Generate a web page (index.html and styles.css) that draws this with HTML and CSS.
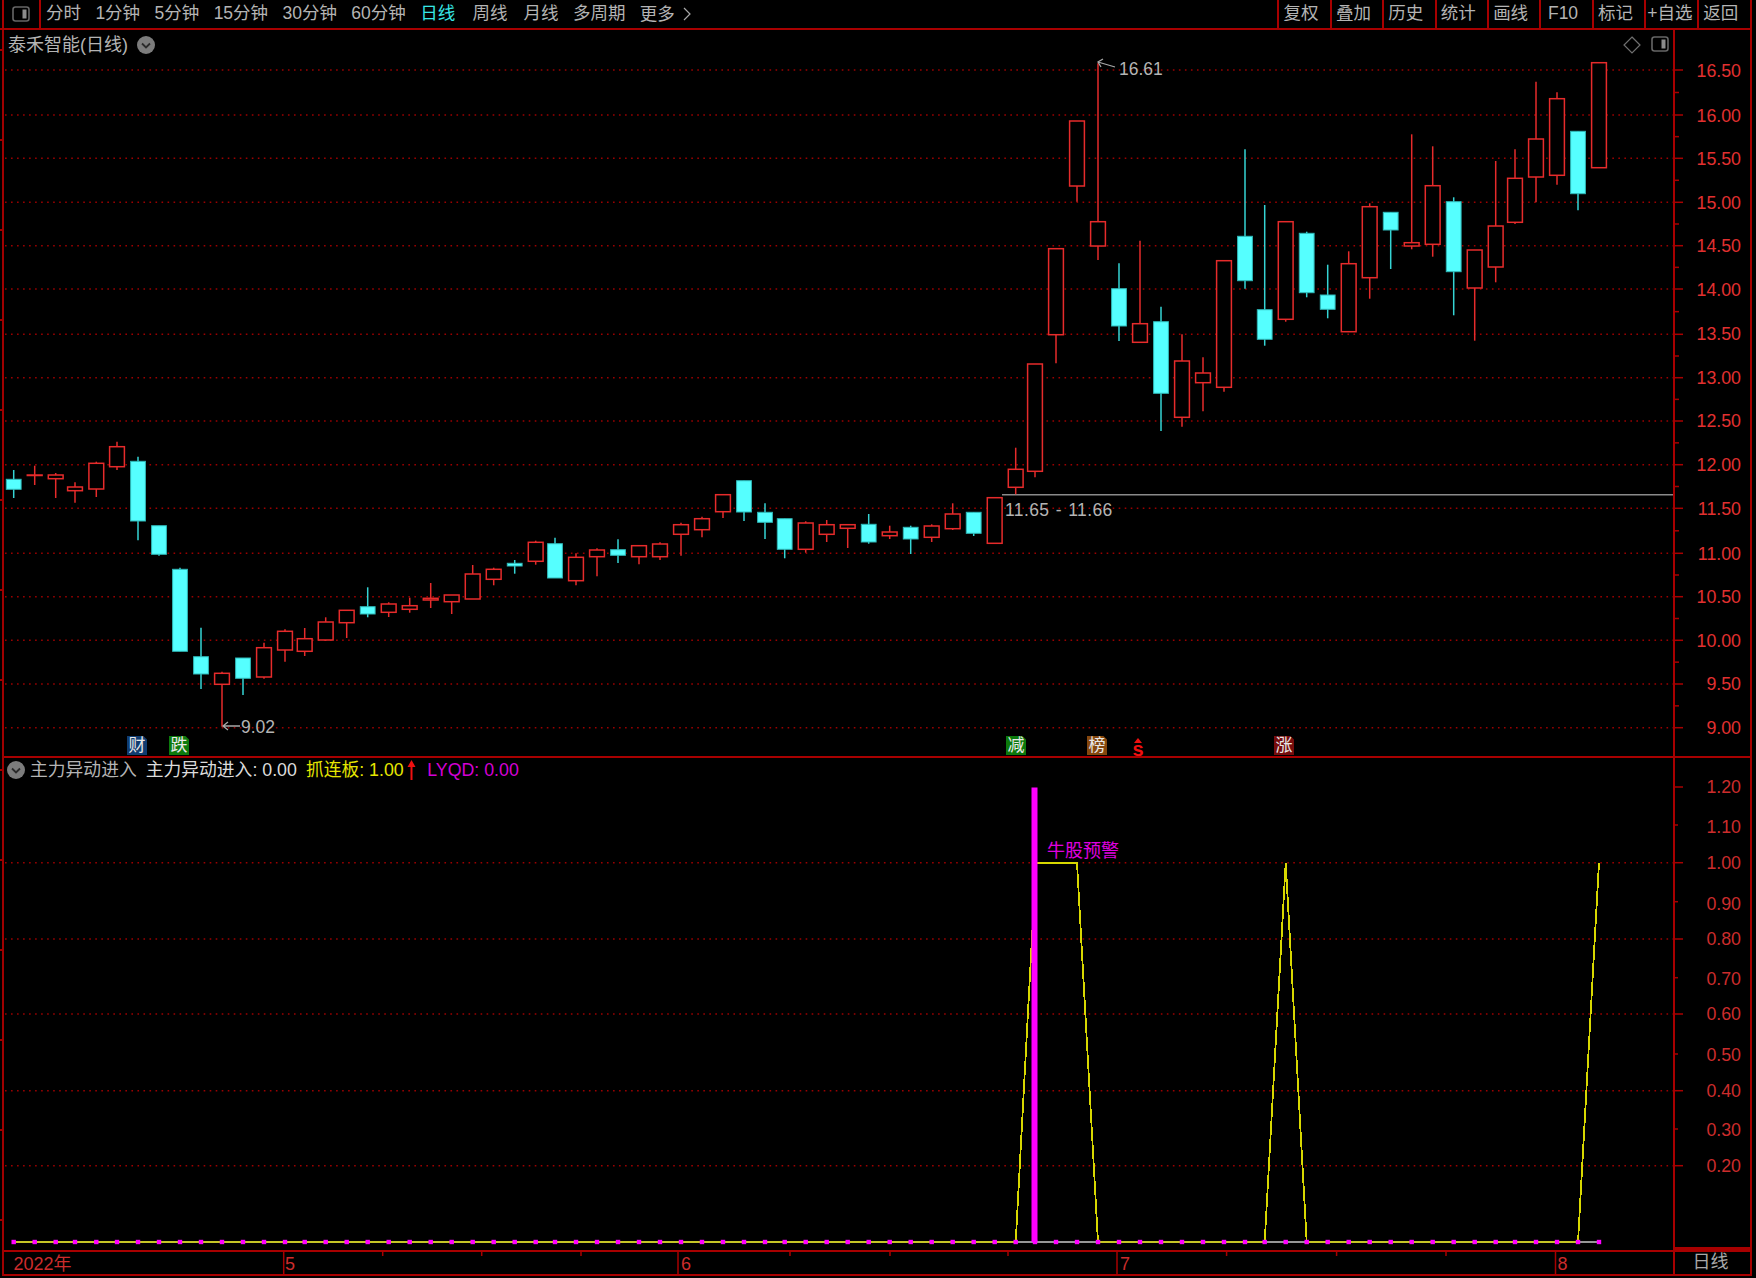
FILE: index.html
```html
<!DOCTYPE html>
<html lang="zh-CN">
<head>
<meta charset="utf-8">
<title>泰禾智能 日线</title>
<link rel="stylesheet" href="styles.css">
</head>
<body>
<div class="app">
  <header class="toolbar">
    <div class="tool-icon">
      <svg class="panel-glyph" viewBox="0 0 18 16"><rect x="1" y="1" width="16" height="14" rx="2.5"/><rect class="glyph-bar" x="10.5" y="3.5" width="4" height="9"/></svg>
    </div>
    <nav class="periods">
      <span>分时</span><span>1分钟</span><span>5分钟</span><span>15分钟</span><span>30分钟</span><span>60分钟</span>
      <span class="active">日线</span><span class="week">周线</span><span>月线</span><span>多周期</span>
      <span class="more">更多<svg class="more-arrow" viewBox="0 0 8 16"><path d="M1 2 L7 8 L1 14"/></svg></span>
    </nav>
    <nav class="actions">
      <span>复权</span><span>叠加</span><span>历史</span><span>统计</span><span>画线</span><span>F10</span><span>标记</span><span class="pick">+自选</span><span class="last">返回</span>
    </nav>
  </header>

  <main class="workspace">
    <div class="gutter"></div>

    <section class="plot main-plot">
      <svg id="price" class="chart" viewBox="4 30 1669 726"></svg>
      <div class="plot-title">
        <span>泰禾智能(日线)</span>
        <svg class="chevron" viewBox="0 0 18 18"><circle cx="9" cy="9" r="9"/><path d="M5 7.5 L9 11.5 L13 7.5"/></svg>
      </div>
      <div class="plot-tools">
        <svg class="diamond" viewBox="0 0 18 18"><path d="M9 1 L17 9 L9 17 L1 9 Z"/></svg>
        <svg class="panel-glyph" viewBox="0 0 18 16"><rect x="1" y="1" width="16" height="14" rx="2.5"/><rect class="glyph-bar" x="10.5" y="3.5" width="4" height="9"/></svg>
      </div>
      <span class="note note-high">16.61</span>
      <span class="note note-low">9.02</span>
      <span class="note note-range">11.65 - 11.66</span>
      <span class="badge badge-cai">财</span>
      <span class="badge badge-die">跌</span>
      <span class="badge badge-jian">减</span>
      <span class="badge badge-bang">榜</span>
      <span class="s-mark">s</span>
      <span class="badge badge-zhang">涨</span>
    </section>

    <aside class="axis main-axis">
      <svg id="price-axis" class="chart" viewBox="1675 30 75 726">
        <text x="1741" y="76.6">16.50</text><text x="1741" y="121.6">16.00</text><text x="1741" y="165">15.50</text><text x="1741" y="208.6">15.00</text>
        <text x="1741" y="252">14.50</text><text x="1741" y="295.6">14.00</text><text x="1741" y="340">13.50</text><text x="1741" y="384">13.00</text>
        <text x="1741" y="427">12.50</text><text x="1741" y="471">12.00</text><text x="1741" y="514.6">11.50</text><text x="1741" y="559.6">11.00</text>
        <text x="1741" y="603">10.50</text><text x="1741" y="646.6">10.00</text><text x="1741" y="690">9.50</text><text x="1741" y="734">9.00</text>
      </svg>
    </aside>

    <section class="plot sub-plot">
      <svg id="signal" class="chart" viewBox="4 758 1669 492"></svg>
      <div class="sub-legend">
        <svg class="chevron" viewBox="0 0 18 18"><circle cx="9" cy="9" r="9"/><path d="M5 7.5 L9 11.5 L13 7.5"/></svg>
        <span class="legend-name">主力异动进入</span>
        <span class="legend-white">主力异动进入: 0.00</span>
        <span class="legend-yellow">抓连板: 1.00</span>
        <svg class="up-arrow" viewBox="0 0 9 20"><path d="M4.5 0 L8.5 7 L5.5 7 L5.5 20 L3.5 20 L3.5 7 L0.5 7 Z"/></svg>
        <span class="legend-magenta">LYQD: 0.00</span>
      </div>
      <span class="signal-label">牛股预警</span>
    </section>

    <aside class="axis sub-axis">
      <svg id="signal-axis" class="chart" viewBox="1675 758 75 489">
        <text x="1741" y="793">1.20</text><text x="1741" y="833">1.10</text><text x="1741" y="869">1.00</text><text x="1741" y="909.5">0.90</text>
        <text x="1741" y="945">0.80</text><text x="1741" y="984.5">0.70</text><text x="1741" y="1020">0.60</text><text x="1741" y="1060.5">0.50</text>
        <text x="1741" y="1097">0.40</text><text x="1741" y="1135.5">0.30</text><text x="1741" y="1172">0.20</text>
      </svg>
    </aside>

    <section class="time-axis">
      <svg id="time" class="chart" viewBox="4 1252 1669 22">
        <text x="13.5" y="1270">2022年</text><text x="285" y="1270">5</text><text x="681" y="1270">6</text><text x="1120" y="1270">7</text><text x="1557.5" y="1270">8</text>
      </svg>
    </section>
    <aside class="period-cell">日线</aside>
  </main>
</div>
<script src="chart.js"></script>
</body>
</html>
```
FILE: styles.css
```css
* { box-sizing: border-box; }
html, body { margin: 0; height: 100%; background: #000; }
body {
  font-family: "Liberation Sans", "Noto Sans CJK SC", sans-serif;
  font-size: 18px;
  color: #b4b4b4;
  overflow: hidden;
}
.app { width: 1752px; }

/* toolbar */
.toolbar {
  display: flex;
  height: 30px;
  border-bottom: 2px solid #a80000;
  font-size: 17.5px;
  line-height: 26px;
}
.tool-icon {
  width: 39px;
  padding-left: 11px;
  padding-top: 6px;
  border-left: 2px solid #a80000;
  margin-left: 2px;
  border-right: 2px solid #a80000;
}
.tool-icon .panel-glyph { display: block; margin-left: -3px; }
.periods { display: flex; gap: 14.4px; padding-left: 5px; flex: 1; }
.periods .active { color: #37e6e6; margin-right: 3px; }
.periods .week { margin-right: 1.5px; }
.more { display: flex; align-items: center; gap: 8px; }
.more-arrow { width: 8px; height: 16px; fill: none; stroke: #a8a8a8; stroke-width: 1.2; }
.actions { display: flex; }
.actions span {
  width: 52.4px;
  text-align: center;
  padding-right: 7px;
  border-left: 2px solid #a80000;
}
.actions .pick { padding-right: 3px; white-space: nowrap; }
.actions .last { width: 55.5px; border-right: 2px solid #a80000; }

.panel-glyph { width: 18px; height: 16px; }
.panel-glyph rect { fill: none; stroke: #666; stroke-width: 1.6; }
.panel-glyph .glyph-bar { fill: #8c8c8c; stroke: none; }

/* frame */
.workspace {
  display: grid;
  grid-template-columns: 4px 1669px 1fr;
  grid-template-rows: 728px 494px 24px;
  border-right: 2px solid #a80000;
}
.gutter {
  grid-row: 1 / 4;
  border-right: 2px solid #a00000;
  background: repeating-linear-gradient(to bottom, transparent 0, transparent 19px, #a00000 19px, #a00000 21px, transparent 21px, transparent 90px);
}
.plot { position: relative; border-bottom: 2px solid #a80000; }
.chart { display: block; width: 100%; height: 100%; }
.axis { border-left: 2px solid #a80000; border-bottom: 2px solid #a80000; }
.sub-axis { border-bottom-width: 5px; }
.axis text { text-anchor: end; font-size: 17.8px; fill: #e23030; }
.sub-axis text { fill: #cc2c2c; }

/* chart primitives drawn by chart.js */
.grid { stroke: #9c0000; stroke-width: 1.4; stroke-dasharray: 1.6 4.42; }
.tick { stroke: #a80000; stroke-width: 1.5; }
.wick-up { stroke: #e62b2b; stroke-width: 1.5; }
.wick-down { stroke: #35d4d4; stroke-width: 1.5; }
.body-up { fill: #000; stroke: #e62b2b; stroke-width: 1.5; }
.body-down { fill: #55ffff; stroke: #2fb8b8; stroke-width: 1; }
.guide { stroke: #8a8a8a; stroke-width: 1.5; }
.note-arrow { stroke: #a8a8a8; stroke-width: 1.3; fill: none; }
.zero-yellow { stroke: #d4d400; stroke-width: 1.6; fill: none; }
.zero-white { stroke: #c8c8c8; stroke-width: 1.6; }
.signal-yellow { stroke: #d8d800; stroke-width: 1.8; fill: none; shape-rendering: crispEdges; }
.signal-bar { stroke: #ff00ff; stroke-width: 6; }
.signal-dot { fill: #ff00ff; }
#time text { font-size: 18px; fill: #cc2c2c; }

/* overlays */
.plot-title {
  position: absolute; left: 4px; top: 2px;
  display: flex; align-items: center; gap: 9px;
  line-height: 26px;
}
.chevron { width: 18px; height: 18px; display: block; }
.chevron circle { fill: #7c7c7c; }
.chevron path { fill: none; stroke: #2a2a2a; stroke-width: 1.8; }
.plot-tools { position: absolute; right: 4px; top: 6px; display: flex; gap: 10px; }
.diamond { width: 18px; height: 18px; fill: none; stroke: #707070; stroke-width: 1.2; }
.note { position: absolute; font-size: 17.5px; color: #b4b4b4; line-height: 20px; white-space: nowrap; }
.note-high { left: 1115px; top: 29px; }
.note-low { left: 237px; top: 687px; }
.note-range { left: 1001px; top: 470px; letter-spacing: 0.4px; word-spacing: 1px; }
.badge {
  position: absolute; top: 706px;
  width: 20px; height: 19px;
  font-size: 17px; line-height: 19px; text-align: center;
  color: #e8e8e8;
  clip-path: polygon(0 0, 82% 0, 100% 18%, 100% 100%, 0 100%);
}
.badge-cai { left: 123px; background: #103c70; }
.badge-die { left: 165px; background: #0c7a0c; }
.badge-jian { left: 1002px; background: #0c7a0c; }
.badge-bang { left: 1083px; background: #85470e; }
.badge-zhang { left: 1270px; background: #760c0c; }
.s-mark {
  position: absolute; left: 1128px; top: 713px;
  width: 12px; text-align: center;
  font-size: 20px; font-weight: bold; line-height: 13px; color: #f01010;
}
.s-mark::before {
  content: ""; position: absolute; left: 2px; top: -5px;
  border: 4px solid transparent; border-top: 0; border-bottom: 5px solid #f01010;
}
.sub-legend {
  position: absolute; left: 3px; top: 0;
  display: flex; align-items: center;
  height: 24px; line-height: 24px;
  font-size: 17.8px;
  white-space: nowrap;
}
.legend-name { margin-left: 5px; }
.legend-white { margin-left: 9px; color: #dcdcdc; }
.legend-yellow { margin-left: 9px; color: #e6e600; }
.legend-magenta { margin-left: 11.5px; color: #d400d4; }
.up-arrow { width: 9px; height: 20px; margin-left: 3px; fill: #f01010; }
.signal-label {
  position: absolute; left: 1043px; top: 82px;
  font-size: 18px; line-height: 22px; color: #e000e0;
}
.time-axis { grid-column: 2; border-bottom: 2px solid #a80000; }
.period-cell {
  border-left: 2px solid #a80000;
  border-bottom: 2px solid #a80000;
  line-height: 20px;
  text-align: center;
  padding-right: 4px;
  color: #a8a8a8;
}
```
FILE: chart.js
```js
// x, wick top, body top, body bottom, wick bottom, direction (1 = up/red, 0 = down/cyan)
var candles = [
  [13.7,470,479.3,489.3,498,0],[34.7,465.7,475,475.5,485,1],[55.7,473,475,478.7,498,1],[75,482.3,487,490.7,502.7,1],
  [96.3,461.7,463.3,489,497,1],[117,441.7,446.7,466.7,470,1],[138,456.7,461.3,521,540.3,0],[159,525.7,525.7,554.3,555.7,0],
  [180,567.7,569.3,651.3,651.3,0],[201,627.7,656.7,674,689,0],[222,671.7,673.3,684.3,726.7,1],[243,658,658,678.3,695,0],
  [264,642.7,647.7,677,678.7,1],[285,629.3,631.3,650,661.7,1],[304.7,628,638.7,651.3,656,1],[325.7,617.3,622,640,640.7,1],
  [346.7,610.3,610.3,622.7,638,1],[367.7,587.3,606.7,614,617.3,0],[388.7,602.3,604,612.3,617,1],[409.7,597.7,605.7,609.3,612.7,1],
  [430.7,583,598.3,600,608,1],[451.7,595,595,601.7,614,1],[472.7,565,574,599,599,1],[493.7,567.7,569.3,579.3,585.3,1],
  [514.7,560,563.3,566,573.7,0],[535.7,540.7,542.3,561.3,564.7,1],[555,537.7,543.7,578,578,0],[576,553.3,557.3,580.7,585.3,1],
  [597,548.3,550,556.7,576.3,1],[618,539.3,549.7,555.3,563,0],[639,545.7,545.7,556.7,564.3,1],[660,542.3,544,556.7,560,1],
  [681,522.7,524.7,534.3,555.7,1],[702,516.7,518.7,529.7,537.3,1],[723,494.7,494.7,511.7,518,1],[744,480.7,480.7,512,521,0],
  [765,503.3,512.3,522.3,539,0],[784.7,518.7,518.7,549.3,558.3,0],[805.7,521.3,523,549.3,552.7,1],[826.7,520,524.7,534.3,542,1],
  [847.7,524.7,524.7,528.3,548,1],[868.7,514,524.3,542,543.7,0],[889.7,525.7,532,535.7,539,1],[910.7,525.7,527.3,539,554,0],
  [931.7,524.3,526,537.3,542,1],[952.7,503.3,514,528.7,530,1],[973.7,512.3,512.3,533.3,536,0],[994.7,497.7,497.7,543.3,543.3,1],
  [1015.7,447.7,469.3,487.3,494.3,1],[1035,364,364,471.3,477.3,1],[1056,248.7,248.7,334.7,363.3,1],[1077,121,121,186,201.7,1],
  [1098,63.3,221.7,246,260,1],[1119,263.3,288.7,326,341,0],[1140,240.7,323.7,342.3,342.3,1],[1161,306.7,321.7,393.3,431,0],
  [1182,334.3,361,417.3,426.7,1],[1203,357.3,373,382.7,411.3,1],[1224,260.7,260.7,387.3,391.7,1],[1245,149.3,236.3,280.7,288.7,0],
  [1264.7,205,309.7,339.3,345.7,0],[1285.7,221.7,221.7,319.3,321.7,1],[1306.7,231.7,233.3,292.7,297.3,0],[1327.7,264.7,295,309.3,318.3,0],
  [1348.7,251.3,263.7,331.7,331.7,1],[1369.7,203.3,206.7,277.7,298.7,1],[1390.7,212.3,212.3,230,269,0],[1411.7,134.3,242.7,246,249.3,1],
  [1432.7,146.3,185.7,244.3,256.7,1],[1453.7,197.3,201.7,271.7,315.3,0],[1474.7,250,250,288,340.7,1],[1495.7,161,226,267,282.3,1],
  [1515,149.3,178.3,222.3,224,1],[1536,81.7,139,177,202.3,1],[1557,92.3,98.7,175.3,184.7,1],[1578,131.3,131.3,193.7,210.3,0],
  [1599,62.7,62.7,167.7,167.7,1]
];
var priceLevels = [70,115,158.3,202.3,245.7,289,334.3,377.7,421,464.7,508.3,553.3,596.7,640.3,684,727.7];
var signalLevels = [862.7,939,1014,1090.7,1165.7];
var signalAxis = [[787,0],[825,1],[862.7,0],[901.7,1],[939,0],[977.7,1],[1014,0],[1054,1],[1090.7,0],[1129,1],[1165.7,0]];
var ZERO = 1242;

function add(svg, tag, cls, attrs) {
  var el = document.createElementNS("http://www.w3.org/2000/svg", tag);
  if (cls) el.setAttribute("class", cls);
  for (var k in attrs) el.setAttribute(k, attrs[k]);
  svg.appendChild(el);
  return el;
}
function line(svg, cls, x1, y1, x2, y2) {
  return add(svg, "line", cls, { x1: x1, y1: y1, x2: x2, y2: y2 });
}

var price = document.getElementById("price");
priceLevels.forEach(function (y) { line(price, "grid", 5, y, 1673, y); });
line(price, "guide", 1002, 494.7, 1673, 494.7);
candles.forEach(function (c) {
  var kind = c[5] ? "up" : "down";
  line(price, "wick-" + kind, c[0], c[1], c[0], c[4]);
  add(price, "rect", "body-" + kind, { x: c[0] - 7.4, y: c[2], width: 14.8, height: Math.max(c[3] - c[2], 0.5) });
});
add(price, "path", "note-arrow", { d: "M1115 67 L1098 62 M1103 59 L1098 62 L1101 67" });
add(price, "path", "note-arrow", { d: "M240 726 L223 726 M228 722 L223 726 L228 730" });

var axis = document.getElementById("price-axis");
priceLevels.forEach(function (y, i) {
  line(axis, "tick", 1675, y, 1683, y);
  if (i < priceLevels.length - 1) {
    var m = (y + priceLevels[i + 1]) / 2;
    line(axis, "tick", 1675, m, 1679, m);
  }
});

var sub = document.getElementById("signal");
signalLevels.forEach(function (y) { line(sub, "grid", 5, y, 1673, y); });
line(sub, "zero-white", 13.7, ZERO, 1599, ZERO);
add(sub, "polyline", "zero-yellow", { points: "13.7," + ZERO + " 1015.7," + ZERO });
add(sub, "polyline", "zero-yellow", { points: "1098," + ZERO + " 1264.7," + ZERO });
add(sub, "polyline", "zero-yellow", { points: "1306.7," + ZERO + " 1578," + ZERO });
add(sub, "polyline", "signal-yellow", { points: "1015.7,1242 1036,862.7 1077,862.7 1098,1242" });
add(sub, "polyline", "signal-yellow", { points: "1264.7,1242 1285.7,862.7 1306.7,1242" });
add(sub, "polyline", "signal-yellow", { points: "1578,1242 1599,862.7" });
line(sub, "signal-bar", 1034.5, 787.5, 1034.5, ZERO);
candles.forEach(function (c) {
  add(sub, "rect", "signal-dot", { x: c[0] - 2.2, y: ZERO - 2.2, width: 4.4, height: 4.4 });
});

var subAxis = document.getElementById("signal-axis");
signalAxis.forEach(function (t) {
  line(subAxis, "tick", 1675, t[0], t[1] ? 1678 : 1683, t[0]);
});

var time = document.getElementById("time");
[283.7, 678, 1117, 1555.5].forEach(function (x) { line(time, "tick", x, 1252, x, 1274); });
[382.7, 481.7, 581, 790, 890, 1008, 1226.6, 1336.6, 1446].forEach(function (x) { line(time, "tick", x, 1252, x, 1256); });
```
